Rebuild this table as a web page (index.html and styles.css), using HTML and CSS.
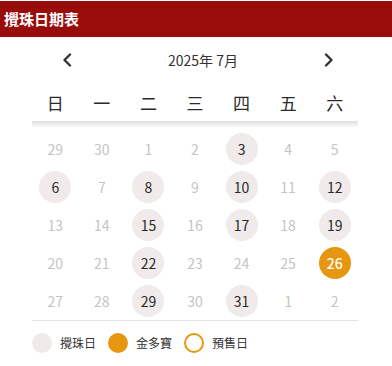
FILE: index.html
```html
<!DOCTYPE html>
<html lang="zh-Hant">
<head>
<meta charset="utf-8">
<link rel="stylesheet" href="styles.css">
</head>
<body>
<header class="header">攪珠日期表</header>
<div class="nav">
  <span class="chev chev-left"><svg width="10" height="14" viewBox="0 0 10 14"><polyline points="8,1.5 2.5,7 8,12.5" fill="none" stroke="#333" stroke-width="2.4" stroke-linecap="round" stroke-linejoin="round"/></svg></span>
  <span class="month">2025年 7月</span>
  <span class="chev chev-right"><svg width="10" height="14" viewBox="0 0 10 14"><polyline points="2,1.5 7.5,7 2,12.5" fill="none" stroke="#333" stroke-width="2.4" stroke-linecap="round" stroke-linejoin="round"/></svg></span>
</div>
<div class="cal">
  <div class="weekdays">
    <span>日</span><span>一</span><span>二</span><span>三</span><span>四</span><span>五</span><span>六</span>
  </div>
  <div class="shadow"></div>
  <div class="days">
    <span class="d">29</span><span class="d">30</span><span class="d">1</span><span class="d">2</span><span class="d draw">3</span><span class="d">4</span><span class="d">5</span>
    <span class="d draw">6</span><span class="d">7</span><span class="d draw">8</span><span class="d">9</span><span class="d draw">10</span><span class="d">11</span><span class="d draw">12</span>
    <span class="d">13</span><span class="d">14</span><span class="d draw">15</span><span class="d">16</span><span class="d draw">17</span><span class="d">18</span><span class="d draw">19</span>
    <span class="d">20</span><span class="d">21</span><span class="d draw">22</span><span class="d">23</span><span class="d">24</span><span class="d">25</span><span class="d snow">26</span>
    <span class="d">27</span><span class="d">28</span><span class="d draw">29</span><span class="d">30</span><span class="d draw">31</span><span class="d">1</span><span class="d">2</span>
  </div>
  <div class="legend">
    <span class="dot dot-draw"></span><span class="lbl">攪珠日</span>
    <span class="dot dot-snow"></span><span class="lbl">金多寶</span>
    <span class="dot dot-pre"></span><span class="lbl">預售日</span>
  </div>
</div>
</body>
</html>
```
FILE: styles.css
```css
html, body {
  margin: 0;
  padding: 0;
  background: #fff;
}
body {
  padding-top: 1px;
  font-family: "Noto Sans CJK TC", "Noto Sans", sans-serif;
  color: #333;
}
.header {
  height: 36px;
  line-height: 36px;
  background: #980c0c;
  color: #fff;
  font-weight: 700;
  font-size: 15px;
  padding-left: 4px;
}
.nav {
  height: 46px;
  display: flex;
  align-items: center;
  padding: 0 58px 0 62px;
}
.chev {
  display: flex;
  width: 10px;
  height: 14px;
}
.month {
  flex: 1;
  text-align: center;
  font-size: 14px;
  padding-left: 10px;
  color: #333;
}
.cal {
  width: 326px;
  margin-left: 32px;
}
.weekdays {
  display: grid;
  grid-template-columns: repeat(7, 1fr);
  height: 38px;
  align-items: center;
  text-align: center;
  font-size: 17px;
  color: #2a2a2a;
}
.shadow {
  height: 7px;
  background: linear-gradient(#dedede, #f6f6f6 70%, #fff);
}
.days {
  display: grid;
  grid-template-columns: repeat(7, 1fr);
  grid-auto-rows: 38px;
  padding-top: 2px;
  border-bottom: 1px solid #e2e2e2;
}
.d {
  display: flex;
  align-items: center;
  justify-content: center;
  width: 32px;
  height: 32px;
  margin: auto;
  border-radius: 50%;
  font-size: 14px;
  color: #c4c4c4;
}
.d.draw {
  background: #f0eaea;
  color: #2a2a2a;
}
.d.snow {
  background: #e6970f;
  color: #fff;
  font-weight: 500;
}
.legend {
  display: flex;
  align-items: center;
  padding-top: 12px;
}
.dot {
  width: 20px;
  height: 20px;
  border-radius: 50%;
  box-sizing: border-box;
  margin-right: 8px;
}
.dot-draw { background: #f0eaea; }
.dot-snow { background: #e6970f; }
.dot-pre { border: 2px solid #e6970f; }
.lbl {
  font-size: 12px;
  color: #333;
  margin-right: 12px;
  line-height: 20px;
}
```
